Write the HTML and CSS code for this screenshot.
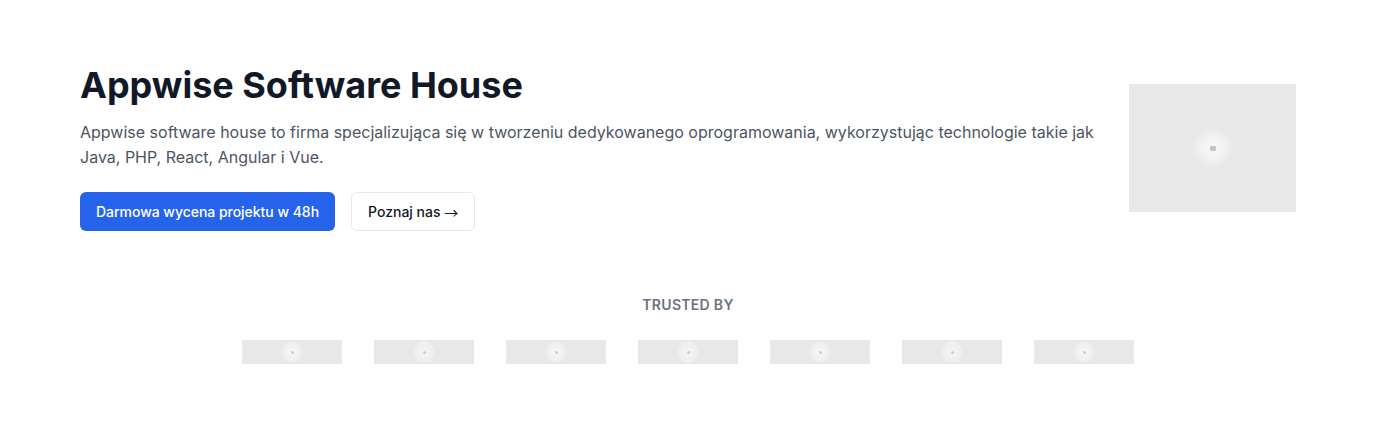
FILE: index.html
```html
<!DOCTYPE html>
<html lang="pl">
<head>
<meta charset="utf-8">
<title>Appwise Software House</title>
<link rel="stylesheet" href="styles.css">
</head>
<body>
<main class="page">
  <section class="hero">
    <div class="hero-text">
      <h1 class="title">Appwise Software House</h1>
      <p class="lead">Appwise software house to firma specjalizująca się w tworzeniu dedykowanego oprogramowania, wykorzystując technologie takie jak Java, PHP, React, Angular i Vue.</p>
      <div class="actions">
        <a class="btn btn-primary" href="#">Darmowa wycena projektu w 48h</a>
        <a class="btn btn-secondary" href="#">Poznaj nas <span class="arrow">→</span></a>
      </div>
    </div>
    <div class="hero-image placeholder"><span class="ph-glow big"><span class="ph-dot"></span></span></div>
  </section>
  <section class="trusted">
    <h2 class="trusted-title">TRUSTED BY</h2>
    <div class="logos">
      <div class="logo placeholder"><span class="ph-glow"><span class="ph-dot small"></span></span></div>
      <div class="logo placeholder"><span class="ph-glow"><span class="ph-dot small"></span></span></div>
      <div class="logo placeholder"><span class="ph-glow"><span class="ph-dot small"></span></span></div>
      <div class="logo placeholder"><span class="ph-glow"><span class="ph-dot small"></span></span></div>
      <div class="logo placeholder"><span class="ph-glow"><span class="ph-dot small"></span></span></div>
      <div class="logo placeholder"><span class="ph-glow"><span class="ph-dot small"></span></span></div>
      <div class="logo placeholder"><span class="ph-glow"><span class="ph-dot small"></span></span></div>
    </div>
  </section>
</main>
</body>
</html>
```
FILE: styles.css
```css
* { box-sizing: border-box; }
html, body { margin: 0; padding: 0; background: #ffffff; }
body {
  font-family: Inter, "Noto Sans", "Liberation Sans", sans-serif;
  color: #111827;
  -webkit-font-smoothing: antialiased;
}
.page { padding: 0 80px; }

.hero {
  display: flex;
  align-items: center;
  gap: 32px;
  padding-top: 65px;
}
.hero-text { flex: 1; min-width: 0; }
.title {
  margin: 0;
  font-size: 36px;
  line-height: 40px;
  font-weight: 700;
  color: #111827;
}
.lead {
  margin: 15px 0 0;
  font-size: 16px;
  line-height: 25px;
  color: #4b5563;
}
.actions {
  display: flex;
  gap: 16px;
  margin-top: 22px;
}
.btn {
  display: inline-flex;
  align-items: center;
  height: 39px;
  padding: 0 16px;
  border-radius: 6px;
  font-size: 14px;
  font-weight: 500;
  text-decoration: none;
  white-space: pre;
}
.btn-primary { background: #2563eb; color: #ffffff; letter-spacing: -0.03px; }
.btn-secondary {
  background: #ffffff;
  color: #111827;
  border: 1px solid #e5e7eb;
}
.arrow {
  font-family: "Noto Sans CJK JP", sans-serif;
  font-weight: 400;
  font-size: 14px;
  line-height: 1;
}

.placeholder {
  background: #e8e8e8;
  display: flex;
  align-items: center;
  justify-content: center;
}
.hero-image { width: 167px; height: 128px; flex: none; }
.ph-glow {
  width: 24px; height: 24px;
  border-radius: 50%;
  background: radial-gradient(circle, #f6f6f6 0%, #f0f0f0 45%, rgba(240,240,240,0) 70%);
  display: flex; align-items: center; justify-content: center;
}
.ph-glow.big { width: 40px; height: 40px; background: radial-gradient(circle, #f8f8f8 0%, #f2f2f2 40%, rgba(238,238,238,0.6) 60%, rgba(232,232,232,0) 72%); }
.ph-dot { width: 6px; height: 5px; border-radius: 1px; background: #c4c4c4; }
.ph-dot.small { width: 3px; height: 3px; border-radius: 50%; background: #cfcfcf; }

.trusted { padding-top: 64px; text-align: center; }
.trusted-title {
  margin: 0;
  font-size: 14px;
  line-height: 20px;
  font-weight: 600;
  letter-spacing: 0.3px;
  color: #6b7280;
}
.logos {
  display: flex;
  justify-content: center;
  gap: 32px;
  margin-top: 25px;
}
.logo { width: 100px; height: 24px; }
```
